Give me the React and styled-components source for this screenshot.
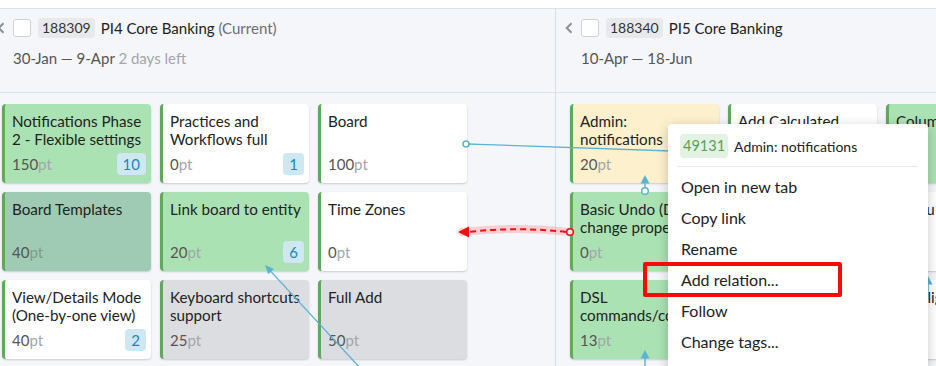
import React from "react";
import styled, { createGlobalStyle } from "styled-components";

const Global = createGlobalStyle`
  html, body { margin: 0; padding: 0; background: #fff; }
  body { font-family: "Lato", "Noto Sans", sans-serif; overflow: hidden; }
`;

const Page = styled.div`
  position: relative;
  width: 936px;
  height: 366px;
  overflow: hidden;
  background: #fff;
`;

const TopStrip = styled.div`
  height: 8px;
  background: #fff;
`;

const Board = styled.div`
  display: flex;
  margin-left: -12px;
  border-top: 1px solid #d9e1ea;
  height: 357px;
  background: #f5f6fa;
`;

const Column = styled.section`
  flex: 0 0 568px;
  box-sizing: border-box;
  border-right: 1px solid #d5dee9;
  display: flex;
  flex-direction: column;
  background: #f5f6fa;
`;

const ColumnHeader = styled.header`
  box-sizing: border-box;
  height: 84px;
  padding-top: 8px;
  border-bottom: 1px solid #d9e1ea;
  background: #f4f6fa;
  display: flex;
  flex-direction: column;
  gap: 10px;
`;

const TitleRow = styled.div`
  display: flex;
  align-items: center;
  height: 21px;
  padding-left: 9px;
`;

const Chevron = styled.svg`
  width: 8px;
  height: 12px;
  margin-right: 8px;
  flex: none;
`;

const Checkbox = styled.span`
  box-sizing: border-box;
  width: 18px;
  height: 18px;
  border: 1px solid #cfd3d8;
  border-radius: 3px;
  background: #fff;
  margin-right: 7px;
  flex: none;
`;

const IdChip = styled.span`
  height: 20px;
  line-height: 20px;
  padding: 0 4px;
  border-radius: 4px;
  background: #e8e9eb;
  color: #333;
  font-size: 14px;
  margin-right: 6px;
`;

const ColumnTitle = styled.span`
  font-size: 15px;
  color: #222;
  white-space: nowrap;
`;

const Muted = styled.span`
  color: #6b6f75;
`;

const DateRow = styled.div`
  height: 20px;
  line-height: 20px;
  padding-left: 25px;
  font-size: 15px;
  color: #555;
  white-space: nowrap;
`;

const Remaining = styled.span`
  color: #a3a6ab;
`;

const CardGrid = styled.div`
  display: grid;
  grid-template-columns: repeat(3, 149px);
  grid-auto-rows: 79px;
  gap: 9px;
  padding: 11px 0 0 14px;
`;

const tones = {
  green: "#aae2b3",
  white: "#ffffff",
  teal: "#9fcab3",
  gray: "#dcdde0",
  yellow: "#fdf0cd",
};

const Card = styled.div`
  box-sizing: border-box;
  background: ${(p) => tones[p.$tone]};
  border-left: 3px solid #5fa95b;
  border-radius: 4px;
  box-shadow: 0 1px 2px rgba(0, 0, 0, 0.18);
  padding: 8px 5px 8px 7px;
  display: flex;
  flex-direction: column;
  justify-content: space-between;
  overflow: hidden;
`;

const CardTitle = styled.div`
  font-size: 15.2px;
  line-height: 18px;
  color: #222;
  max-height: 36px;
  overflow: hidden;
  white-space: pre-line;
`;

const CardFooter = styled.div`
  display: flex;
  align-items: center;
  justify-content: space-between;
  height: 22px;
`;

const Points = styled.span`
  font-size: 15px;
  color: #555;
`;

const Unit = styled.span`
  color: ${(p) => (p.$tone === "teal" ? "#7f9c8c" : "#a3a6ab")};
`;

const Count = styled.span`
  min-width: 21px;
  height: 22px;
  line-height: 22px;
  padding: 0 6px;
  box-sizing: border-box;
  text-align: center;
  border-radius: 4px;
  background: #cfe7f1;
  color: #1c86bd;
  font-size: 15px;
`;

const Overlay = styled.svg`
  position: absolute;
  left: 0;
  top: 0;
  width: 936px;
  height: 366px;
  pointer-events: none;
`;

const Menu = styled.div`
  position: absolute;
  left: 668px;
  top: 124px;
  width: 260px;
  height: 260px;
  box-sizing: border-box;
  background: #fff;
  border-radius: 4px;
  box-shadow: 0 3px 12px rgba(0, 0, 0, 0.22);
  padding-top: 10px;
`;

const MenuHeader = styled.div`
  display: flex;
  align-items: center;
  gap: 6px;
  margin: 0 10px;
  padding: 0 0 8px 2px;
  border-bottom: 1px solid #e7e7e7;
`;

const MenuId = styled.span`
  height: 24px;
  line-height: 24px;
  padding: 0 3px;
  border-radius: 4px;
  background: #e3f2e3;
  color: #5b9e5b;
  font-size: 14.5px;
`;

const MenuHeaderText = styled.span`
  font-size: 14px;
  color: #222;
`;

const MenuList = styled.div`
  padding-top: 4px;
`;

const MenuItem = styled.div`
  height: 31px;
  line-height: 31px;
  padding: 0 13px;
  font-size: 16px;
  color: #222;
  white-space: nowrap;
`;

const Highlight = styled.div`
  position: absolute;
  left: 643px;
  top: 262px;
  width: 199px;
  height: 35px;
  box-sizing: border-box;
  border: 4px solid #f20c0c;
  border-radius: 2px;
`;

const columns = [
  {
    id: "188309",
    title: "PI4 Core Banking",
    suffix: "(Current)",
    dates: "30-Jan — 9-Apr",
    left: "2 days left",
    cards: [
      { title: "Notifications Phase 2 - Flexible settings", pts: 150, count: 10, tone: "green" },
      { title: "Practices and Workflows full", pts: 0, count: 1, tone: "white" },
      { title: "Board", pts: 100, tone: "white" },
      { title: "Board Templates", pts: 40, tone: "teal" },
      { title: "Link board to entity", pts: 20, count: 6, tone: "green" },
      { title: "Time Zones", pts: 0, tone: "white" },
      { title: "View/Details Mode (One-by-one view)", pts: 40, count: 2, tone: "white" },
      { title: "Keyboard shortcuts support", pts: 25, tone: "gray" },
      { title: "Full Add", pts: 50, tone: "gray" },
    ],
  },
  {
    id: "188340",
    title: "PI5 Core Banking",
    dates: "10-Apr — 18-Jun",
    cards: [
      { title: "Admin:\nnotifications", pts: 20, tone: "yellow" },
      { title: "Add Calculated Fields", pts: 8, tone: "white" },
      { title: "Columns", pts: 10, tone: "green" },
      { title: "Basic Undo (DnD, change properties)", pts: 0, tone: "green" },
      { title: "Inline editing", pts: 5, tone: "white" },
      { title: "Menu Sidebar", pts: 3, tone: "white" },
      { title: "DSL commands/controls", pts: 13, tone: "green" },
      { title: "Filters", pts: 8, tone: "white" },
      { title: "Highlighting groups", pts: 5, tone: "white" },
    ],
  },
];

const BLUE = "#5ab3d3";

function Links() {
  return (
    <Overlay viewBox="0 0 936 366">
      <path d="M469 144 C 540 146, 610 149, 700 152" stroke={BLUE} strokeWidth="1.3" fill="none" />
      <circle cx="466" cy="144" r="3" fill="#fff" stroke={BLUE} strokeWidth="1.5" />
      <line x1="645" y1="187.5" x2="645" y2="182" stroke={BLUE} strokeWidth="1.5" />
      <polygon points="645,175 649.5,183.5 640.5,183.5" fill={BLUE} />
      <circle cx="645" cy="191" r="3.3" fill="#fff" stroke={BLUE} strokeWidth="1.5" />
      <path d="M570 232 Q 518 226 462 232" stroke="rgba(255,70,70,0.22)" strokeWidth="8" fill="none" strokeLinecap="round" />
      <path d="M566 232 Q 518 226.5 468 232" stroke="#f01010" strokeWidth="2" strokeDasharray="6 4" fill="none" />
      <polygon points="458,232 469,226.5 469,237.5" fill="#f01010" />
      <circle cx="570" cy="232" r="3.3" fill="#fff" stroke="#f01010" strokeWidth="1.6" />
      <line x1="271" y1="271.6" x2="362" y2="370" stroke={BLUE} strokeWidth="1.3" />
      <polygon points="265,265 274,268.9 268.2,274.3" fill={BLUE} />
      <line x1="645" y1="357" x2="645" y2="366" stroke={BLUE} strokeWidth="1.5" />
      <polygon points="645,350 649.5,358.5 640.5,358.5" fill={BLUE} />
      <line x1="928" y1="283" x2="928" y2="300" stroke={BLUE} strokeWidth="1.5" />
      <polygon points="928,276 932.5,284.5 923.5,284.5" fill={BLUE} />
    </Overlay>
  );
}

export default function App() {
  return (
    <Page>
      <Global />
      <TopStrip />
      <Board>
        {columns.map((col) => (
          <Column key={col.id}>
            <ColumnHeader>
              <TitleRow>
                <Chevron viewBox="0 0 8 12">
                  <polyline points="6.5,1.2 1.8,6 6.5,10.8" fill="none" stroke="#8a8f98" strokeWidth="2" />
                </Chevron>
                <Checkbox />
                <IdChip>{col.id}</IdChip>
                <ColumnTitle>
                  {col.title}
                  {col.suffix && <Muted> {col.suffix}</Muted>}
                </ColumnTitle>
              </TitleRow>
              <DateRow>
                {col.dates}
                {col.left && <Remaining> {col.left}</Remaining>}
              </DateRow>
            </ColumnHeader>
            <CardGrid>
              {col.cards.map((c, i) => (
                <Card key={i} $tone={c.tone}>
                  <CardTitle>{c.title}</CardTitle>
                  <CardFooter>
                    <Points>
                      {c.pts}
                      <Unit $tone={c.tone}>pt</Unit>
                    </Points>
                    {c.count != null && <Count>{c.count}</Count>}
                  </CardFooter>
                </Card>
              ))}
            </CardGrid>
          </Column>
        ))}
      </Board>
      <Links />
      <Menu>
        <MenuHeader>
          <MenuId>49131</MenuId>
          <MenuHeaderText>Admin: notifications</MenuHeaderText>
        </MenuHeader>
        <MenuList>
          <MenuItem>Open in new tab</MenuItem>
          <MenuItem>Copy link</MenuItem>
          <MenuItem>Rename</MenuItem>
          <MenuItem>Add relation...</MenuItem>
          <MenuItem>Follow</MenuItem>
          <MenuItem>Change tags...</MenuItem>
        </MenuList>
      </Menu>
      <Highlight />
    </Page>
  );
}
